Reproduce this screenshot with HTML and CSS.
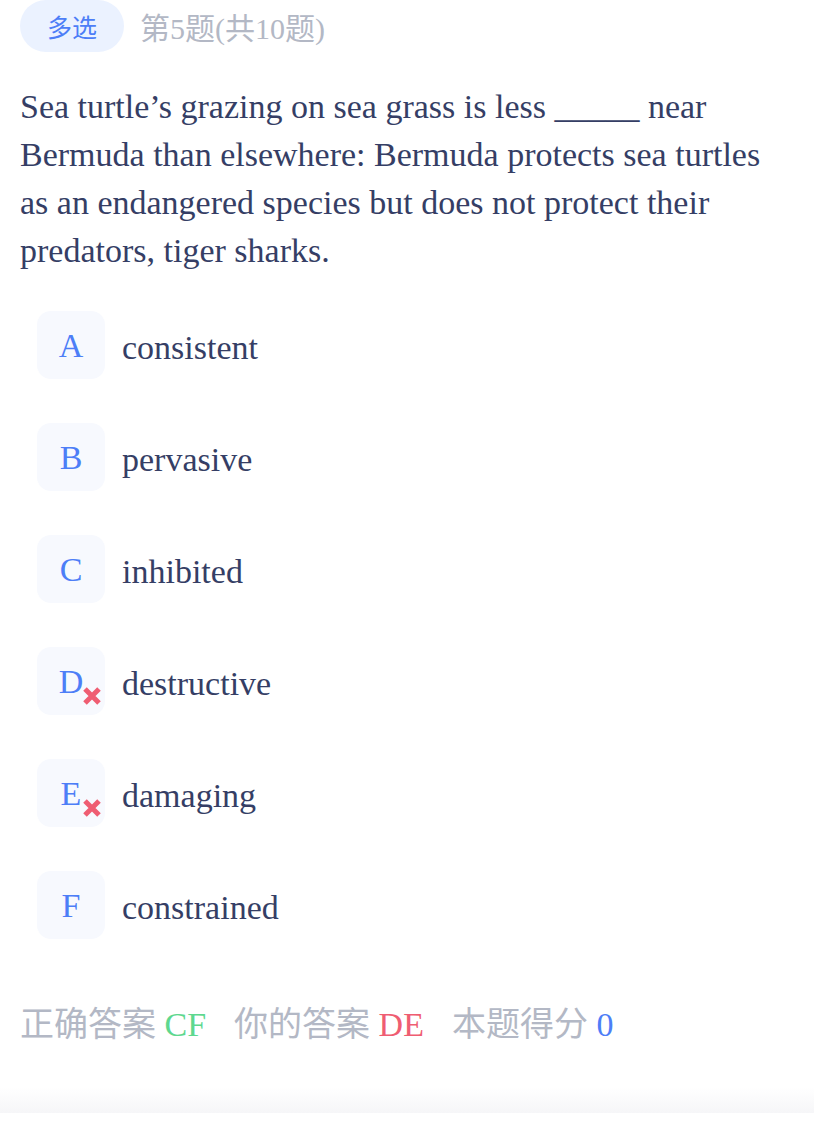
FILE: index.html
```html
<!DOCTYPE html>
<html lang="zh">
<head>
<meta charset="utf-8">
<link rel="stylesheet" href="styles.css">
</head>
<body>
<div class="page">
  <div class="header">
    <span class="pill">多选</span>
    <span class="progress">第5题(共10题)</span>
  </div>
  <p class="question">Sea turtle’s grazing on sea grass is less _____ near Bermuda than elsewhere: Bermuda protects sea turtles as an endangered species but does not protect their predators, tiger sharks.</p>
  <ul class="options">
    <li class="option"><span class="key">A</span><span class="label">consistent</span></li>
    <li class="option"><span class="key">B</span><span class="label">pervasive</span></li>
    <li class="option"><span class="key">C</span><span class="label">inhibited</span></li>
    <li class="option"><span class="key">D<svg class="wrong" viewBox="0 0 20 20"><path d="M3 3L17 17M17 3L3 17"/></svg></span><span class="label">destructive</span></li>
    <li class="option"><span class="key">E<svg class="wrong" viewBox="0 0 20 20"><path d="M3 3L17 17M17 3L3 17"/></svg></span><span class="label">damaging</span></li>
    <li class="option"><span class="key">F</span><span class="label">constrained</span></li>
  </ul>
  <div class="result">
    <span class="item">正确答案 <b class="ok">CF</b></span>
    <span class="item">你的答案 <b class="bad">DE</b></span>
    <span class="item">本题得分 <b class="score">0</b></span>
  </div>
</div>
<div class="bottom-fade"></div>
<div class="bottom-bar"></div>
</body>
</html>
```
FILE: styles.css
```css
html, body {
  margin: 0;
  padding: 0;
  background: #ffffff;
}
body {
  font-family: "Liberation Serif", "Noto Sans CJK SC", serif;
  color: #353e65;
  height: 1122px;
  overflow: hidden;
  display: flex;
  flex-direction: column;
}
.page {
  padding: 0 20px;
  flex: 1;
}
.header {
  display: flex;
  align-items: center;
  gap: 16px;
  height: 52px;
}
.pill {
  display: flex;
  align-items: center;
  height: 52px;
  padding: 0 27px;
  border-radius: 26px;
  background: #ebf2ff;
  color: #4d7ef7;
  font-family: "Noto Sans CJK SC", sans-serif;
  font-size: 25px;
}
.progress {
  color: #b3b8c5;
  font-size: 30px;
  font-family: "Liberation Serif", "Noto Sans CJK SC", serif;
}
.question {
  margin: 31px 0 0;
  font-size: 34px;
  line-height: 48px;
}
.options {
  list-style: none;
  margin: 36px 0 0;
  padding: 0 0 0 17px;
  display: flex;
  flex-direction: column;
  gap: 44px;
}
.option {
  display: flex;
  align-items: center;
  gap: 17px;
  font-size: 34px;
}
.label {
  padding-top: 6px;
}
.key {
  position: relative;
  width: 68px;
  height: 68px;
  border-radius: 14px;
  background: #f7f9fe;
  color: #4d7ef7;
  display: flex;
  align-items: center;
  justify-content: center;
  padding-top: 2px;
  box-sizing: border-box;
}
.wrong {
  position: absolute;
  left: 45px;
  top: 39px;
  width: 20px;
  height: 20px;
  fill: none;
  stroke: #ef5d72;
  stroke-width: 5;
}
.result {
  margin-top: 62px;
  font-size: 34px;
  line-height: 48px;
  color: #b3b8c5;
  display: flex;
  gap: 28px;
}
.result b {
  font-weight: normal;
}
.ok { color: #5ed88f; }
.bad { color: #ef5d72; }
.score { color: #4d7ef7; }
.bottom-fade {
  height: 26px;
  background: linear-gradient(to bottom, rgba(245, 245, 247, 0), #f6f6f8);
}
.bottom-bar {
  height: 9px;
  background: #ffffff;
}
```
